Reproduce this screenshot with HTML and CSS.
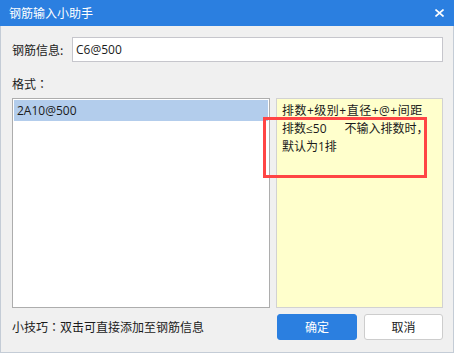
FILE: index.html
```html
<!DOCTYPE html>
<html lang="zh-CN">
<head>
<meta charset="utf-8">
<title>钢筋输入小助手</title>
<link rel="stylesheet" href="styles.css">
</head>
<body>
<div class="window">
  <div class="titlebar">
    <span class="title">钢筋输入小助手</span>
    <svg class="close" width="9" height="8" viewBox="0 0 9 8"><path d="M0.5 0.5 L8.5 7.5 M8.5 0.5 L0.5 7.5" stroke="#fff" stroke-width="1.6" fill="none"/></svg>
  </div>
  <div class="content">
    <div class="info-row">
      <label class="info-label">钢筋信息:</label>
      <div class="info-input">C6@500</div>
    </div>
    <div class="format-label">格式<span class="colon" lang="zh-TW">：</span></div>
    <div class="panels">
      <div class="list">
        <div class="list-item selected">2A10@500</div>
      </div>
      <div class="hint">
        <div class="hint-line hint-first">排数+级别+直径+@+间距</div>
        <div class="hint-line">排数≤50<span class="hint-gap"></span>不输入排数时，</div>
        <div class="hint-line">默认为1排</div>
        <div class="mark"></div>
      </div>
    </div>
    <div class="footer">
      <span class="tip">小技巧<span class="colon" lang="zh-TW">：</span>双击可直接添加至钢筋信息</span>
      <div class="buttons">
        <button class="btn btn-primary">确定</button>
        <button class="btn btn-default">取消</button>
      </div>
    </div>
  </div>
</div>
</body>
</html>
```
FILE: styles.css
```css
* { box-sizing: border-box; }
html, body { margin: 0; padding: 0; background: #f0f0f0; }
body {
  width: 454px;
  height: 353px;
  overflow: hidden;
  font-family: "Open Sans", "Noto Sans CJK SC", sans-serif;
  font-size: 12px;
  color: #1b1b1b;
}
.window {
  width: 454px;
  height: 353px;
  display: flex;
  flex-direction: column;
  background: #f0f0f0;
}
.titlebar {
  height: 26px;
  background: #2b7fe0;
  display: flex;
  align-items: center;
  justify-content: space-between;
  padding: 0 9px 0 9px;
  flex: none;
}
.title {
  color: #ffffff;
  font-family: "Noto Sans CJK SC", sans-serif;
  font-size: 12px;
  line-height: 16px;
}
.close { display: block; margin-right: 1px; }
.content {
  flex: 1;
  border: 1px solid #c4ccd6;
  border-top: none;
  padding: 11px 10px 0 11px;
  display: flex;
  flex-direction: column;
}
.info-row {
  display: flex;
  align-items: center;
  height: 25px;
}
.info-label {
  width: 60px;
  flex: none;
  font-family: "Noto Sans CJK SC", sans-serif;
  font-size: 12px;
  line-height: 16px;
}
.info-input {
  flex: 1;
  height: 25px;
  background: #ffffff;
  border: 1px solid #c6c6cc;
  padding: 0 3px;
  font-size: 12px;
  line-height: 23px;
}
.format-label {
  margin-top: 14px;
  height: 16px;
  line-height: 16px;
  font-family: "Noto Sans CJK SC", sans-serif;
  margin-bottom: 6px;
}
.colon { font-family: "Noto Sans CJK TC", sans-serif; }
.panels {
  display: flex;
  gap: 6px;
  height: 210px;
}
.list {
  width: 258px;
  flex: none;
  background: #ffffff;
  border: 1px solid #adadad;
  padding: 1px 1px;
}
.list-item {
  height: 21px;
  line-height: 21px;
  padding-left: 3px;
  font-size: 12px;
}
.list-item.selected { background: #b3cdec; }
.hint {
  flex: 1;
  position: relative;
  background: #ffffcc;
  border: 1px solid #d2d2d2;
  padding: 3px 5px;
  font-family: "Noto Sans CJK SC", sans-serif;
}
.hint-line {
  height: 18px;
  line-height: 18px;
  white-space: nowrap;
  font-family: "Open Sans", "Noto Sans CJK SC", sans-serif;
}
.hint-first { letter-spacing: 0.5px; }
.hint-gap { display: inline-block; width: 18px; }
.mark {
  position: absolute;
  left: -14px;
  top: 18px;
  width: 164px;
  height: 61px;
  border: 3px solid #ff4545;
}
.footer {
  margin-top: 6px;
  display: flex;
  align-items: center;
  justify-content: space-between;
  height: 26px;
}
.tip {
  font-family: "Noto Sans CJK SC", sans-serif;
  line-height: 16px;
}
.buttons { display: flex; gap: 7px; }
.btn {
  height: 26px;
  border-radius: 3px;
  font-family: "Noto Sans CJK SC", sans-serif;
  font-size: 12px;
  line-height: 16px;
  padding: 0;
  cursor: pointer;
}
.btn-primary {
  width: 80px;
  background: #2b7fe0;
  border: 1px solid #2b7fe0;
  color: #ffffff;
}
.btn-default {
  width: 79px;
  background: #ffffff;
  border: 1px solid #cdcdcd;
  color: #1b1b1b;
}
```
